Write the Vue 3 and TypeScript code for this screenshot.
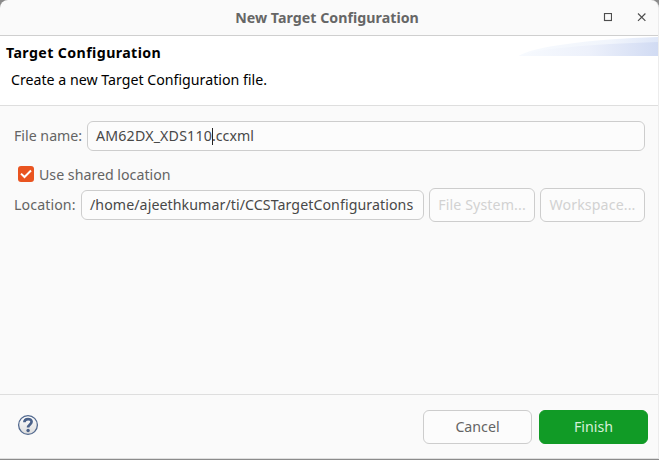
<script setup lang="ts">
import { ref } from 'vue'

const fileStem = ref('AM62DX_XDS110')
const fileExt = ref('.ccxml')
const location = ref('/home/ajeethkumar/ti/CCSTargetConfigurations')
const shared = ref(true)
</script>

<template>
  <div class="backdrop">
    <div class="window">
      <header class="titlebar">
        <span class="side"></span>
        <h1 class="title">New Target Configuration</h1>
        <div class="side controls">
          <svg class="ctl" width="9" height="9" viewBox="0 0 9 9"><rect x="1.5" y=".5" width="7" height="7" /></svg>
          <svg class="ctl" width="9" height="9" viewBox="0 0 9 9"><path d="M1 .5 8.4 7.9M8.4.5 1 7.9" /></svg>
        </div>
      </header>

      <section class="banner">
        <div class="heading">
          <h2>Target Configuration</h2>
          <p>Create a new Target Configuration file.</p>
        </div>
        <svg class="swoosh" width="139" height="20" viewBox="0 0 139 20">
          <defs>
            <linearGradient id="sw1" x1="0" x2="1">
              <stop offset="0" stop-color="#f7fafe" />
              <stop offset=".65" stop-color="#f1f5fc" />
              <stop offset="1" stop-color="#dfe7f8" />
            </linearGradient>
            <linearGradient id="sw2" x1="0" x2="1">
              <stop offset="0" stop-color="#f7fafe" />
              <stop offset=".5" stop-color="#edf1fb" />
              <stop offset="1" stop-color="#d1dbf3" />
            </linearGradient>
          </defs>
          <path fill="url(#sw1)" d="M0 20C12 11 70 3 139 1V20Z" />
          <path fill="url(#sw2)" d="M0 20C16 13 70 8 139 6V20Z" />
        </svg>
      </section>

      <main class="content">
        <div class="row name-row">
          <label class="t-name">File name:</label>
          <div class="field grow"><span class="t-stem">{{ fileStem }}</span><i class="caret"></i><span class="t-ext">{{ fileExt }}</span></div>
        </div>
        <div class="row check-row">
          <span v-if="shared" class="check">
            <svg width="16" height="16" viewBox="0 0 16 16"><path d="M3 7.6 6.5 11 13 4.5" /></svg>
          </span>
          <label class="t-shared">Use shared location</label>
        </div>
        <div class="row loc-row">
          <label class="t-loc">Location:</label>
          <div class="field loc-field"><span class="t-path">{{ location }}</span></div>
          <button class="btn fs" disabled><span class="t-fs">File System...</span></button>
          <button class="btn ws" disabled><span class="t-ws">Workspace...</span></button>
        </div>
      </main>

      <footer class="footer">
        <svg class="help" width="22" height="22" viewBox="0 0 22 22">
          <defs>
            <linearGradient id="hg" x1="0" y1="0" x2="0" y2="1">
              <stop offset="0" stop-color="#fff" />
              <stop offset="1" stop-color="#dcdcdc" />
            </linearGradient>
          </defs>
          <circle cx="11" cy="11" r="9.4" fill="url(#hg)" stroke="#52698f" stroke-width="1.3" />
          <path d="M7.4 8.3C7.4 4 14.6 4.1 14.6 7.8C14.6 10.4 11.1 10.5 11.1 13.6" fill="none" stroke="#4a6189" stroke-width="2.7" />
          <circle cx="11.1" cy="16.5" r="1.7" fill="#4a6189" />
        </svg>
        <button class="btn action"><span class="t-cancel">Cancel</span></button>
        <button class="btn action primary"><span class="t-finish">Finish</span></button>
      </footer>
    </div>
  </div>
</template>

<style>
body { margin: 0; background: #8b8b8b; }
</style>

<style scoped>
.backdrop {
  width: 659px;
  height: 460px;
  box-sizing: border-box;
  padding-bottom: 1px;
  background: #8b8b8b;
  overflow: hidden;
}
.window {
  display: flex;
  flex-direction: column;
  box-sizing: border-box;
  width: 659px;
  height: 459px;
  border-right: 1px solid #ececec;
  border-bottom: 1px solid #dedede;
  border-radius: 8px 8px 0 0;
  background: #fafafa;
  overflow: hidden;
  font: 14.2px/20px "Noto Sans", "Open Sans", sans-serif;
  color: #646464;
  white-space: nowrap;
}
.titlebar {
  display: flex;
  align-items: center;
  box-sizing: border-box;
  height: 36px;
  border-bottom: 1px solid #cfcfcf;
}
.side { width: 55px; }
.title {
  flex: 1;
  margin: 0 0 0 -4px;
  text-align: center;
  font-size: 14.2px;
  line-height: 20px;
  letter-spacing: .04px;
  font-weight: 700;
  color: #666;
}
.controls { display: flex; gap: 25px; width: 55px; }
.ctl { display: block; fill: none; stroke: #4d4d4d; stroke-width: 1.15; }
.banner {
  display: flex;
  box-sizing: border-box;
  height: 70px;
  border-bottom: 1px solid #dedede;
  background: #fff;
  color: #000;
}
.heading { flex: 1; padding: 7px 0 0 6px; }
h2 { margin: 0; font-size: 14.2px; line-height: 20px; font-weight: 700; letter-spacing: .4px; }
p { margin: 7px 0 0 5px; line-height: 20px; }
.swoosh { display: block; }
.content { flex: 1; padding: 15px 13px 0 14px; }
.row { display: flex; align-items: center; }
.name-row { height: 30px; }
.name-row label { width: 73px; }
.field {
  display: flex;
  align-items: center;
  box-sizing: border-box;
  height: 30px;
  padding-left: 8px;
  border: 1px solid #cdcdcd;
  border-radius: 6px;
  background: #fcfcfc;
  color: #484848;
}
.grow { flex: 1; }
.t-stem { letter-spacing: .18px; }
.t-path { letter-spacing: .075px; }
.t-loc { letter-spacing: .1px; }
.caret { width: 1px; height: 17px; margin-right: -1px; background: #222; }
.check-row { height: 20px; margin-top: 13px; padding-left: 4px; gap: 5px; }
.check { width: 16px; height: 16px; border-radius: 3px; background: #e95420; }
.t-shared { padding-top: 1px; }
.check svg { display: block; fill: none; stroke: #fff; stroke-width: 2; }
.loc-row { height: 34px; margin-top: 4px; }
.loc-row > label { width: 67px; }
.loc-field { width: 343px; }
.btn {
  display: flex;
  align-items: center;
  justify-content: center;
  box-sizing: border-box;
  height: 34px;
  padding: 0;
  border: 1px solid #cdcdcd;
  border-radius: 6px;
  background: #fcfcfc;
  color: #646464;
  font: inherit;
}
.btn:disabled { color: #d2d2d2; }
.t-fs, .t-ws { letter-spacing: .12px; }
.fs { width: 106px; margin-left: 5px; }
.ws { width: 105px; margin-left: 5px; }
.footer {
  display: flex;
  align-items: center;
  box-sizing: border-box;
  height: 64px;
  border-top: 1px solid #dedede;
  padding: 1px 10px 0 17px;
}
.help { margin-right: auto; margin-top: -4px; }
.action { width: 109px; margin-left: 7px; }
.primary { border-color: #119b26; background: #119b26; color: #d5f0d8; }
</style>
